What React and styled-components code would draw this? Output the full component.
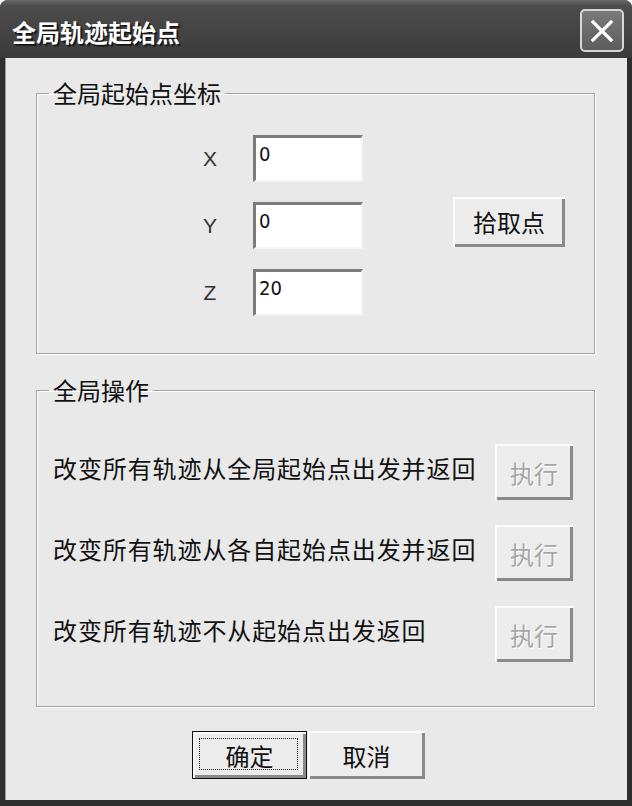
import React from "react";
import styled, { createGlobalStyle } from "styled-components";

const GlobalStyle = createGlobalStyle`
  html, body {
    margin: 0;
    padding: 0;
    background: #ffffff;
  }
  body {
    font-family: "Noto Sans CJK SC", "Liberation Sans", sans-serif;
  }
`;

const cjk = `"Noto Sans CJK SC", "Liberation Sans", sans-serif`;

const Window = styled.div`
  width: 632px;
  height: 806px;
  display: flex;
  flex-direction: column;
  background: #2f2f2f;
  border-radius: 8px 8px 0 0;
  overflow: hidden;
  box-sizing: border-box;
`;

const TitleBar = styled.div`
  height: 58px;
  flex: none;
  display: flex;
  align-items: center;
  justify-content: space-between;
  padding: 0 8px 0 12px;
  background: linear-gradient(#6a6a6a 0px, #4c4c4c 6px, #444444 30px, #3b3b3b 58px);
  box-sizing: border-box;
`;

const Title = styled.div`
  color: #ffffff;
  font-family: ${cjk};
  font-size: 24px;
  font-weight: 700;
  text-shadow: 1px 1px 0 #111, 2px 2px 1px #222;
  margin-top: 4px;
`;

const CloseButton = styled.div`
  width: 44px;
  height: 43px;
  margin-top: 3px;
  border: 2px solid #d6d6d6;
  border-radius: 5px;
  background: linear-gradient(#7a7a7a, #5c5c5c);
  display: flex;
  align-items: center;
  justify-content: center;
  box-sizing: border-box;
`;

const Body = styled.div`
  flex: 1;
  margin: 0 5px 6px 5px;
  background: #e9e9e9;
  border-left: 1px solid #9a9a9a;
  padding: 21px 32px 0 30px;
  display: flex;
  flex-direction: column;
  box-sizing: border-box;
`;

const Group = styled.fieldset`
  margin: 0;
  margin-top: ${(p) => p.$top || 0}px;
  padding: ${(p) => p.$pad};
  border: 1px solid #a2a2a2;
  box-shadow: 1px 1px 0 #ffffff, inset 1px 1px 0 #ffffff;
  min-width: 0;
`;

const Legend = styled.legend`
  margin-left: 12px;
  padding: 0 4px;
  font-family: ${cjk};
  font-size: 24px;
  line-height: 28px;
  color: #111;
`;

const CoordArea = styled.div`
  display: flex;
  align-items: center;
  padding-left: 153px;
`;

const CoordGrid = styled.div`
  display: grid;
  grid-template-columns: 40px 110px;
  column-gap: 23px;
  row-gap: 20px;
  align-items: center;
`;

const AxisLabel = styled.div`
  font-family: "Liberation Sans", Arial, sans-serif;
  font-size: 21px;
  color: #333;
  text-align: center;
`;

const TextBox = styled.input`
  width: 110px;
  height: 47px;
  box-sizing: border-box;
  margin: 0;
  padding: 0 4px 10px 3px;
  font-family: "DejaVu Sans Condensed", "Liberation Sans", sans-serif;
  font-size: 20px;
  color: #111;
  background: #ffffff;
  border: none;
  border-top: 3px solid #7c7c7c;
  border-left: 3px solid #7c7c7c;
  border-bottom: 2px solid #f4f4f4;
  border-right: 2px solid #f4f4f4;
  outline: none;
`;

const Button = styled.button`
  position: relative;
  width: ${(p) => p.$w}px;
  height: ${(p) => p.$h}px;
  margin: 0;
  padding: 0;
  flex: none;
  box-sizing: border-box;
  font-family: ${cjk};
  font-size: 24px;
  color: ${(p) => (p.disabled ? "#a6a6a6" : "#111")};
  text-shadow: ${(p) => (p.disabled ? "1px 1px 0 #ffffff" : "none")};
  background: #ececec;
  border: ${(p) => (p.$default ? "1px solid #111" : "none")};
  box-shadow: inset 2px 2px 0 #fbfbfb, inset -3px -3px 0 #8a8a8a;
  cursor: default;
`;

const FocusRing = styled.span`
  position: absolute;
  left: 6px;
  top: 6px;
  right: 8px;
  bottom: 8px;
  border: 1px dotted #222;
  pointer-events: none;
`;

const ActionList = styled.div`
  display: flex;
  flex-direction: column;
  gap: 25px;
`;

const ActionRow = styled.div`
  display: flex;
  align-items: center;
  justify-content: space-between;
  padding-left: 16px;
  padding-right: 21px;
`;

const ActionText = styled.div`
  font-family: ${cjk};
  font-size: 24px;
  letter-spacing: 0.9px;
  color: #111;
  margin-top: -10px;
`;

const Footer = styled.div`
  display: flex;
  justify-content: center;
  padding-right: 14px;
  margin-top: 24px;
  gap: 1px;
`;

const actions = [
  "改变所有轨迹从全局起始点出发并返回",
  "改变所有轨迹从各自起始点出发并返回",
  "改变所有轨迹不从起始点出发返回",
];

export default function App() {
  return (
    <>
      <GlobalStyle />
      <Window>
        <TitleBar>
          <Title>全局轨迹起始点</Title>
          <CloseButton>
            <svg width="24" height="24" viewBox="0 0 24 24">
              <path d="M3 3 L21 21 M21 3 L3 21" stroke="#ffffff" strokeWidth="3.2" strokeLinecap="square" />
            </svg>
          </CloseButton>
        </TitleBar>
        <Body>
          <Group $pad="28px 0 37px 0">
            <Legend>全局起始点坐标</Legend>
            <CoordArea>
              <CoordGrid>
                <AxisLabel>X</AxisLabel>
                <TextBox defaultValue="0" />
                <AxisLabel>Y</AxisLabel>
                <TextBox defaultValue="0" />
                <AxisLabel>Z</AxisLabel>
                <TextBox defaultValue="20" />
              </CoordGrid>
              <Button $w={112} $h={50} style={{ marginLeft: 90, marginTop: -8 }}>
                拾取点
              </Button>
            </CoordArea>
          </Group>
          <Group $top={22} $pad="40px 0 44px 0">
            <Legend>全局操作</Legend>
            <ActionList>
              {actions.map((a) => (
                <ActionRow key={a}>
                  <ActionText>{a}</ActionText>
                  <Button $w={78} $h={56} disabled>
                    执行
                  </Button>
                </ActionRow>
              ))}
            </ActionList>
          </Group>
          <Footer>
            <Button $w={115} $h={48} $default>
              确定
              <FocusRing />
            </Button>
            <Button $w={117} $h={48}>
              取消
            </Button>
          </Footer>
        </Body>
      </Window>
    </>
  );
}
